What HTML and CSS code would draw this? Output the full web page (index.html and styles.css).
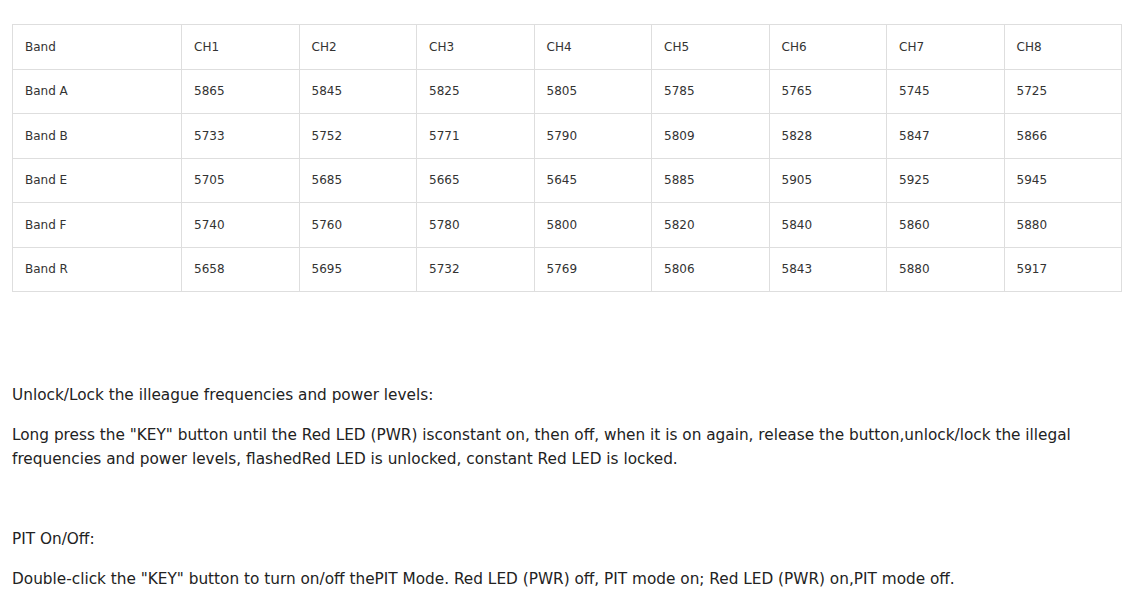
FILE: index.html
```html
<!DOCTYPE html>
<html>
<head>
<meta charset="utf-8">
<link rel="stylesheet" href="styles.css">
</head>
<body>
<div class="page">
  <table class="freq">
    <colgroup>
      <col class="c-band"><col><col><col><col><col><col><col><col>
    </colgroup>
    <tr><td>Band</td><td>CH1</td><td>CH2</td><td>CH3</td><td>CH4</td><td>CH5</td><td>CH6</td><td>CH7</td><td>CH8</td></tr>
    <tr><td>Band A</td><td>5865</td><td>5845</td><td>5825</td><td>5805</td><td>5785</td><td>5765</td><td>5745</td><td>5725</td></tr>
    <tr><td>Band B</td><td>5733</td><td>5752</td><td>5771</td><td>5790</td><td>5809</td><td>5828</td><td>5847</td><td>5866</td></tr>
    <tr><td>Band E</td><td>5705</td><td>5685</td><td>5665</td><td>5645</td><td>5885</td><td>5905</td><td>5925</td><td>5945</td></tr>
    <tr><td>Band F</td><td>5740</td><td>5760</td><td>5780</td><td>5800</td><td>5820</td><td>5840</td><td>5860</td><td>5880</td></tr>
    <tr><td>Band R</td><td>5658</td><td>5695</td><td>5732</td><td>5769</td><td>5806</td><td>5843</td><td>5880</td><td>5917</td></tr>
  </table>
  <p class="title first">Unlock/Lock the illeague frequencies and power levels:</p>
  <p class="body">Long press the "KEY" button until the Red LED (PWR) isconstant on, then off, when it is on again, release the button,unlock/lock the illegal frequencies and power levels, flashedRed LED is unlocked, constant Red LED is locked.</p>
  <p class="title second">PIT On/Off:</p>
  <p class="body">Double-click the "KEY" button to turn on/off thePIT Mode. Red LED (PWR) off, PIT mode on; Red LED (PWR) on,PIT mode off.</p>
</div>
</body>
</html>
```
FILE: styles.css
```css
html, body {
  margin: 0;
  padding: 0;
  background: #fff;
}
.page {
  padding: 24px 8px 0 12px;
  font-family: "DejaVu Sans", sans-serif;
  color: #222;
}
.freq {
  width: 1109px;
  border-collapse: collapse;
  table-layout: fixed;
  font-size: 12px;
  color: #333;
}
.freq col { width: 117.5px; }
.freq col.c-band { width: 169px; }
.freq td {
  border: 1px solid #dedede;
  height: 44.5px;
  padding: 0 0 0 12px;
  box-sizing: border-box;
  vertical-align: middle;
}
p {
  margin: 0;
  font-size: 15.3px;
  line-height: 24px;
}
.title.first { margin-top: 91px; }
.title.second { margin-top: 56px; }
.body { margin-top: 16px; }
```
